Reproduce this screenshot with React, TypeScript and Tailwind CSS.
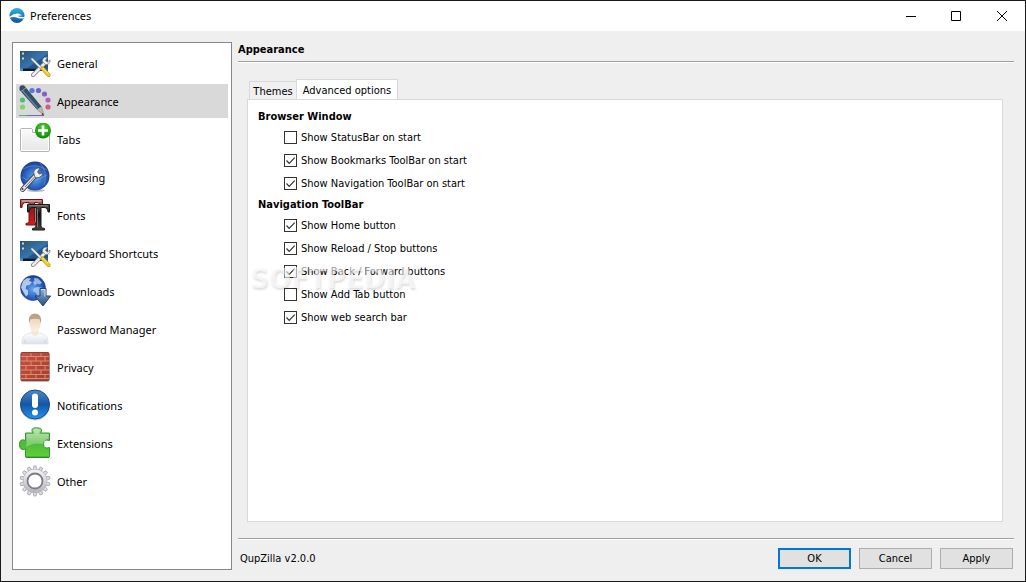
import React, { useState } from 'react';

const IconDefs: React.FC = () => (
  <svg width="0" height="0" className="absolute" aria-hidden="true">
    <defs>
      <linearGradient id="screen" x1="0" y1="0" x2="1" y2="1">
        <stop offset="0" stopColor="#2c5078" />
        <stop offset="0.5" stopColor="#3474ac" />
        <stop offset="1" stopColor="#2a5c98" />
      </linearGradient>
      <linearGradient id="folder" x1="0" y1="0" x2="0" y2="1">
        <stop offset="0" stopColor="#fafafa" />
        <stop offset="1" stopColor="#e6e6e6" />
      </linearGradient>
      <radialGradient id="green" cx="0.5" cy="0.3" r="0.7">
        <stop offset="0" stopColor="#4fd02f" />
        <stop offset="1" stopColor="#0a8a0a" />
      </radialGradient>
      <radialGradient id="globe" cx="0.5" cy="0.55" r="0.6">
        <stop offset="0" stopColor="#6aa8ec" />
        <stop offset="0.55" stopColor="#2c66c4" />
        <stop offset="1" stopColor="#16307c" />
      </radialGradient>
      <linearGradient id="redT" x1="0" y1="0" x2="0" y2="1">
        <stop offset="0" stopColor="#b98080" />
        <stop offset="0.3" stopColor="#8a1c1c" />
        <stop offset="1" stopColor="#e01818" />
      </linearGradient>
      <linearGradient id="blackT" x1="0" y1="0" x2="0" y2="1">
        <stop offset="0" stopColor="#555555" />
        <stop offset="0.4" stopColor="#111111" />
        <stop offset="1" stopColor="#444444" />
      </linearGradient>
      <linearGradient id="arrow" x1="0" y1="0" x2="0" y2="1">
        <stop offset="0" stopColor="#8db8e0" />
        <stop offset="1" stopColor="#29487e" />
      </linearGradient>
      <linearGradient id="shirt" x1="0" y1="0" x2="0" y2="1">
        <stop offset="0" stopColor="#ffffff" />
        <stop offset="1" stopColor="#dfe2ec" />
      </linearGradient>
      <linearGradient id="skin" x1="0" y1="0" x2="0" y2="1">
        <stop offset="0" stopColor="#ecd2b4" />
        <stop offset="1" stopColor="#fbf1e6" />
      </linearGradient>
      <linearGradient id="brick" x1="0" y1="0" x2="1" y2="1">
        <stop offset="0" stopColor="#cc5242" />
        <stop offset="1" stopColor="#a83a2c" />
      </linearGradient>
      <linearGradient id="notice" x1="0" y1="0" x2="0" y2="1">
        <stop offset="0" stopColor="#4a88c8" />
        <stop offset="0.5" stopColor="#1556a4" />
        <stop offset="1" stopColor="#1f95f8" />
      </linearGradient>
      <linearGradient id="puzzle" x1="0" y1="0" x2="0" y2="1">
        <stop offset="0" stopColor="#a9dc9a" />
        <stop offset="0.5" stopColor="#4fb93a" />
        <stop offset="1" stopColor="#5fd038" />
      </linearGradient>
      <linearGradient id="cog" x1="0" y1="0" x2="0" y2="1">
        <stop offset="0" stopColor="#f2f2f4" />
        <stop offset="1" stopColor="#b8b8c0" />
      </linearGradient>
      <linearGradient id="logo" x1="0" y1="0" x2="0" y2="1">
        <stop offset="0" stopColor="#2cb4e4" />
        <stop offset="1" stopColor="#14509c" />
      </linearGradient>
    </defs>
  </svg>
);

const Icon: React.FC<{ children: React.ReactNode }> = ({ children }) => (
  <svg width="32" height="32" viewBox="0 0 32 32" className="shrink-0" aria-hidden="true">
    {children}
  </svg>
);

const ToolsIcon = () => (
  <Icon>
    <rect x="1" y="4" width="28" height="20" fill="url(#screen)" />
    <path d="M8 21 29 7v14Z" fill="#16386a" opacity="0.450" />
    <path d="M4 21.500h19V24H4Z" fill="#0c1a30" />
    <path d="M1 21.500h3V24H1Z" fill="#4f90d0" />
    <path d="M3 6.500h2M3 11.500h2" stroke="#c8e0a0" strokeWidth="2" />
    <path d="M14 28 26 16" stroke="#777" strokeWidth="4" strokeLinecap="round" />
    <path d="M14 28 26 16" stroke="#ececec" strokeWidth="2.600" strokeLinecap="round" />
    <path d="M28.500 10.500c-3-1-5.500 1-5 4.200l2.800 2.800c3 .5 5.200-1.700 4.600-4.500l-2.500 2-2-1.600Z" fill="#ececec" stroke="#777" strokeWidth="0.800" />
    <path d="m13 12 10 10" stroke="#777" strokeWidth="2.600" strokeLinecap="round" />
    <path d="m13 12 10 10" stroke="#f4f4f4" strokeWidth="1.600" strokeLinecap="round" />
    <path d="m23.500 21.500 6 6.500" stroke="#b08c14" strokeWidth="4" strokeLinecap="round" />
    <path d="m23.500 21.500 6 6.500" stroke="#f0c820" strokeWidth="3" strokeLinecap="round" />
    <path d="m24 21 5.500 6" stroke="#ffe98a" strokeWidth="1" />
  </Icon>
);

const AppearanceIcon = () => (
  <Icon>
    <circle cx="3.500" cy="22" r="2.600" fill="#82d468" />
    <circle cx="3.500" cy="15" r="2.600" fill="#48c078" />
    <circle cx="13" cy="5.500" r="2.600" fill="#4c7ce0" />
    <circle cx="19.500" cy="5.500" r="2.600" fill="#6a64cc" />
    <circle cx="25.500" cy="9" r="2.600" fill="#8460c8" />
    <circle cx="29" cy="15" r="2.600" fill="#b060c0" />
    <circle cx="29" cy="22" r="2.600" fill="#d05c80" />
    <path d="M0 30.500h9" stroke="#5cae88" />
    <path d="M8 30.500h9" stroke="#5870c0" />
    <path d="M16 30.500h9" stroke="#8a5ab0" />
    <path d="M.500 3q0-2.500 3-2.700Q5 0 6 1.500L22.500 21.500 18 24.500.500 5Z" fill="#344e64" />
    <path d="m3.500 5.500 15 17.500" stroke="#6486a0" strokeWidth="1.200" />
    <path d="M2 6.500 7 2.800" stroke="#8ca0b0" />
    <path d="m18 24.500 4.500-3L25 30Z" fill="#b4bcac" stroke="#7c8880" strokeWidth="0.600" />
    <path d="m23.500 28 1.500 2.500-2.500-1.200Z" fill="#26323c" />
  </Icon>
);

const TabsIcon = () => (
  <Icon>
    <path d="M3 5.500h9q1.500 0 1.500 1.500v2.500H29q1.500 0 1.500 1.500v16q0 1.500-1.500 1.500H3Q1.500 28.500 1.500 27V7Q1.500 5.500 3 5.500Z" fill="url(#folder)" stroke="#b4b4b4" />
    <path d="M2.500 27.500V6.500h10v4h17v17Z" fill="none" stroke="#fff" />
    <circle cx="24" cy="7.500" r="8" fill="url(#green)" />
    <path d="M24 2.500v10M19 7.500h10" stroke="#fff" strokeWidth="2.600" />
  </Icon>
);

const BrowsingIcon = () => (
  <Icon>
    <ellipse cx="17" cy="29.500" rx="9" ry="1.500" fill="#bbb" />
    <circle cx="16" cy="15" r="14.500" fill="url(#globe)" />
    <path d="M4 8q12-7 24 1M3 16q9 8 25-2M21 2q8 8 4 22" fill="none" stroke="#9cc8f4" strokeWidth="0.600" opacity="0.600" />
    <path d="M3.500 28.500 18 13" stroke="#3c4450" strokeWidth="4.800" strokeLinecap="round" />
    <path d="M3.500 28.500 18 13" stroke="#e4e4e4" strokeWidth="3.200" strokeLinecap="round" />
    <path d="M6 26 16 15.500" stroke="#777" strokeWidth="1" />
    <path d="M15 13c-1-3.500 2-6.500 6-6l-2.500 4 2 2.200L23 12l-.5-3c2 2 1 7-3 7.500l-3 .5Z" fill="#f0f0f0" stroke="#48505c" strokeWidth="0.800" />
    <circle cx="3.500" cy="28" r="1" fill="#444" />
  </Icon>
);

const FontsIcon = () => (
  <Icon>
    <path d="M1.500.5h22v7H22q0-4-4-4h-2.500v19q0 2 3 2V26H7v-1.500q3 0 3-2v-19H7q-4 0-4 5H1.500Z" fill="url(#redT)" stroke="#701414" />
    <path d="M3 2h19" stroke="#dcb4b4" />
    <path d="M8.500 5.500h22v7.500H29q0-4.500-4-4.500h-3V27q0 2.500 3.500 2.500V31H13.500v-1.500q3.500 0 3.500-2.500V8.500h-3q-4 0-4 4.500H8.500Z" fill="url(#blackT)" stroke="#181818" />
    <path d="M10 6.800h19" stroke="#8a8a8a" />
    <path d="M18.500 10v18" stroke="#777" />
  </Icon>
);

const DownloadsIcon = () => (
  <Icon>
    <circle cx="14" cy="13" r="12.500" fill="url(#globe)" stroke="#1c3c8c" strokeWidth="0.600" />
    <path d="m4 6 4-3 4 .5-2 2.500 3 1-2.500 3-3 .5-1 3 2.500 2v4l-2 2-3-5-2-4Z" fill="#c8dcf4" opacity="0.850" />
    <path d="m15 3 4 .5 4 4-2 2-3-1-2 2-2-3 1.500-2ZM15 13l4-1 5 1-1 5-4 4-2-4-3-2Z" fill="#b8d4f4" opacity="0.750" />
    <path d="M21 13.500h6V21h4.500L24 31 16 21h5Z" fill="url(#arrow)" stroke="#244070" />
    <path d="M22 14.500h4v7" fill="none" stroke="#d0e4f8" />
  </Icon>
);

const PasswordIcon = () => (
  <Icon>
    <path d="M3 31q-1-8 5-10l5-1.500h6l5 1.500q6 2 5 10Z" fill="url(#shirt)" stroke="#dcdee6" strokeWidth="0.700" />
    <path d="M12.500 15h7v6q-3.500 4-7 0Z" fill="#f6e6d4" />
    <ellipse cx="16" cy="11" rx="5.500" ry="7.500" fill="url(#skin)" />
    <path d="M10 10Q8.500 1 16 .5 23.500 1 22 10q-1-1-1.300-3.500Q16 5 11.300 6.500 11 9 10 10Z" fill="#b8a48c" />
    <path d="M6 30v-3M26 30v-3" stroke="#cdd1dd" />
  </Icon>
);

const PrivacyIcon = () => (
  <Icon>
    <rect x="1.500" y="2" width="29" height="29" rx="2" fill="#777" opacity="0.500" />
    <rect x="2" y="1.500" width="28" height="28" rx="1" fill="url(#brick)" stroke="#8e4036" />
    <path d="M2 5.500h28M2 10h28M2 14.500h28M2 19h28M2 23.500h28M2 27.500h28" stroke="#d69a7c" strokeWidth="0.900" />
    <path d="M12 2v3.500M22 2v3.500M8 5.500V10M17 5.500V10M26 5.500V10M12 10v4.500M22 10v4.500M7 14.500V19M17 14.500V19M26 14.500V19M12 19v4.500M22 19v4.500M7 23.500v4M17 23.500v4M26 23.500v4" stroke="#d69a7c" strokeWidth="0.900" />
  </Icon>
);

const NotificationsIcon = () => (
  <Icon>
    <circle cx="16" cy="16.500" r="15" fill="#9a9a9a" opacity="0.500" />
    <circle cx="16" cy="15.500" r="14.500" fill="url(#notice)" stroke="#164c8c" />
    <rect x="13" y="4.500" width="6" height="14.500" rx="3" fill="#fff" />
    <circle cx="16" cy="23.500" r="3" fill="#fff" />
  </Icon>
);

const ExtensionsIcon = () => (
  <Icon>
    <path d="M6.500 6H14Q10.500 1 17.500.700 25 1 21.500 6H30.500v7.500q-6-2-6 3.500t6 3.500V30H6.500v-8Q.500 24 .500 17.500T6.500 13.500Z" fill="url(#puzzle)" stroke="#2e9a2a" />
    <path d="M7.500 7h8.500Q12 2 17.500 1.800 23 2 19.500 7h10v4.500Q24 14 24 17 13 15 7.500 20Z" fill="#fff" opacity="0.300" />
    <path d="M7 30.500h23" stroke="#279020" />
  </Icon>
);

const OtherIcon = () => (
  <Icon>
    {Array.from({ length: 14 }, (_, i) => (
      <path key={i} d="M14 5.500 14.800 1h2.400l.8 4.500Z" transform={`rotate(${(i * 360) / 14} 16 16)`} fill="#dcdce2" stroke="#a4a4ac" strokeWidth="0.800" />
    ))}
    <circle cx="16" cy="16" r="9.500" fill="none" stroke="#a8a8b0" strokeWidth="4.800" />
    <circle cx="16" cy="16" r="9.500" fill="none" stroke="url(#cog)" strokeWidth="4.200" />
    <circle cx="16" cy="16" r="7.500" fill="#fff" stroke="#7c7c88" strokeWidth="1.800" />
  </Icon>
);

const PAGES = [
  { name: 'General', icon: ToolsIcon },
  { name: 'Appearance', icon: AppearanceIcon },
  { name: 'Tabs', icon: TabsIcon },
  { name: 'Browsing', icon: BrowsingIcon },
  { name: 'Fonts', icon: FontsIcon },
  { name: 'Keyboard Shortcuts', icon: ToolsIcon },
  { name: 'Downloads', icon: DownloadsIcon },
  { name: 'Password Manager', icon: PasswordIcon },
  { name: 'Privacy', icon: PrivacyIcon },
  { name: 'Notifications', icon: NotificationsIcon },
  { name: 'Extensions', icon: ExtensionsIcon },
  { name: 'Other', icon: OtherIcon },
];

const GROUPS = [
  {
    title: 'Browser Window',
    options: [
      { label: 'Show StatusBar on start', on: false },
      { label: 'Show Bookmarks ToolBar on start', on: true },
      { label: 'Show Navigation ToolBar on start', on: true },
    ],
  },
  {
    title: 'Navigation ToolBar',
    options: [
      { label: 'Show Home button', on: true },
      { label: 'Show Reload / Stop buttons', on: true },
      { label: 'Show Back / Forward buttons', on: true },
      { label: 'Show Add Tab button', on: false },
      { label: 'Show web search bar', on: true },
    ],
  },
];

const TitleBar: React.FC = () => (
  <header className="flex h-[30px] shrink-0 items-center bg-white pl-2">
    <svg width="16" height="16" viewBox="0 0 16 16" aria-hidden="true">
      <circle cx="8" cy="7.500" r="7.500" fill="url(#logo)" />
      <path d="M1 8.500Q5 5 9 5.500q2.500.5 4 2.200-2.500-.6-4.500.3Q11 9.200 15.300 9l-.5 1.300Q10 11 7.500 9.500 4.500 8.500.800 9.800Z" fill="#fff" />
    </svg>
    <h1 className="ml-[5px] flex-1">Preferences</h1>
    <button type="button" aria-label="Minimize" className="grid h-full w-[44px] place-items-center">
      <svg width="12" height="12" viewBox="0 0 12 12" stroke="#000"><path d="M1 6.500h10" /></svg>
    </button>
    <button type="button" aria-label="Maximize" className="grid h-full w-[46px] place-items-center">
      <svg width="12" height="12" viewBox="0 0 12 12" fill="none" stroke="#000"><path d="M1.500 1.500h9v9h-9Z" /></svg>
    </button>
    <button type="button" aria-label="Close" className="grid h-full w-[46px] place-items-center">
      <svg width="12" height="12" viewBox="0 0 12 12" stroke="#000"><path d="m1 1 10 10M11 1 1 11" /></svg>
    </button>
  </header>
);

const CheckOption: React.FC<{ label: string; on: boolean }> = ({ label, on }) => (
  <label className="flex h-[23px] items-center gap-1">
    <span className="grid size-[13px] place-items-center">
      <input type="checkbox" defaultChecked={on} className="peer col-start-1 row-start-1 size-[13px] appearance-none border border-[#333] bg-white" />
      <svg viewBox="0 0 13 13" className="pointer-events-none invisible col-start-1 row-start-1 size-[13px] peer-checked:visible" fill="none" stroke="#333" strokeWidth="1.200">
        <path d="m2.500 6.500 2.700 2.800 5.500-5.600" />
      </svg>
    </span>
    <span className="pt-0.5">{label}</span>
  </label>
);

const App: React.FC = () => {
  const [page, setPage] = useState('Appearance');

  return (
    <div className="flex min-h-screen flex-col border border-[#1a1a1a] bg-[#efefef] font-['Noto_Sans','Open_Sans',sans-serif] text-[11px] text-black">
      <IconDefs />
      <TitleBar />
      <div className="flex flex-1 gap-1.5 p-[11px]">
        <nav className="flex w-[220px] shrink-0 flex-col gap-1 border border-[#828790] bg-white p-[3px]">
          {PAGES.map(({ name, icon: PageIcon }) => (
            <button
              key={name}
              type="button"
              onClick={() => setPage(name)}
              className={`flex h-[34px] items-center gap-1.5 pl-[3px] text-left ${page === name ? 'bg-[#d9d9d9]' : ''}`}
            >
              <PageIcon />
              <span className="pt-0.5">{name}</span>
            </button>
          ))}
        </nav>

        <main className="flex min-w-0 flex-1 flex-col font-['DejaVu_Sans_Condensed','DejaVu_Sans',sans-serif]">
          <h2 className="h-[19px] leading-4 font-bold">{page}</h2>
          <div className="h-[2px] border-t border-[#a0a0a0] bg-white" />

          <section className="mt-4 mr-[11px] mb-4 ml-[9px] flex flex-1 flex-col">
            <div role="tablist" className="flex h-5 items-end pl-0.5">
              <button type="button" role="tab" aria-selected="false" className="h-[18px] w-12 border border-b-0 border-[#d9d9d9] bg-[#f0f0f0] pt-0.5">
                Themes
              </button>
              <button type="button" role="tab" aria-selected="true" className="relative -mb-px -ml-px h-[21px] w-[102px] border border-b-0 border-[#d9d9d9] bg-white pt-0.5">
                Advanced options
              </button>
            </div>
            <div role="tabpanel" className="relative flex-1 border border-[#d9d9d9] bg-white px-2.5 pt-[7px]">
              {GROUPS.map((group) => (
                <fieldset key={group.title}>
                  <legend className="h-[19px] leading-5 font-bold">{group.title}</legend>
                  <div className="flex flex-col items-start pl-[26px]">
                    {group.options.map((option) => (
                      <CheckOption key={option.label} {...option} />
                    ))}
                  </div>
                </fieldset>
              ))}
              <span className="pointer-events-none absolute top-[162px] left-[2px] flex text-[29px] leading-8 font-bold text-white/40 [text-shadow:0_0_0_rgb(255_255_255/0.4),1px_2px_2px_rgb(0_0_0/0.12)]">
                SOFTPEDIA
                <span className="text-[8px] leading-3">®</span>
              </span>
            </div>
          </section>

          <div className="h-[2px] border-t border-[#a0a0a0] bg-white" />
          <footer className="flex items-center gap-2 pt-2 pr-px pb-px pl-0.5">
            <span className="flex-1 pt-0.5">QupZilla v2.0.0</span>
            <button type="button" className="h-[21px] w-[73px] border-2 border-[#0078d7] bg-[#e1e1e1] leading-4">OK</button>
            <button type="button" className="h-[21px] w-[73px] border border-[#adadad] bg-[#e1e1e1] leading-4">Cancel</button>
            <button type="button" className="h-[21px] w-[73px] border border-[#adadad] bg-[#e1e1e1] leading-4">Apply</button>
          </footer>
        </main>
      </div>
    </div>
  );
};

export default App;
